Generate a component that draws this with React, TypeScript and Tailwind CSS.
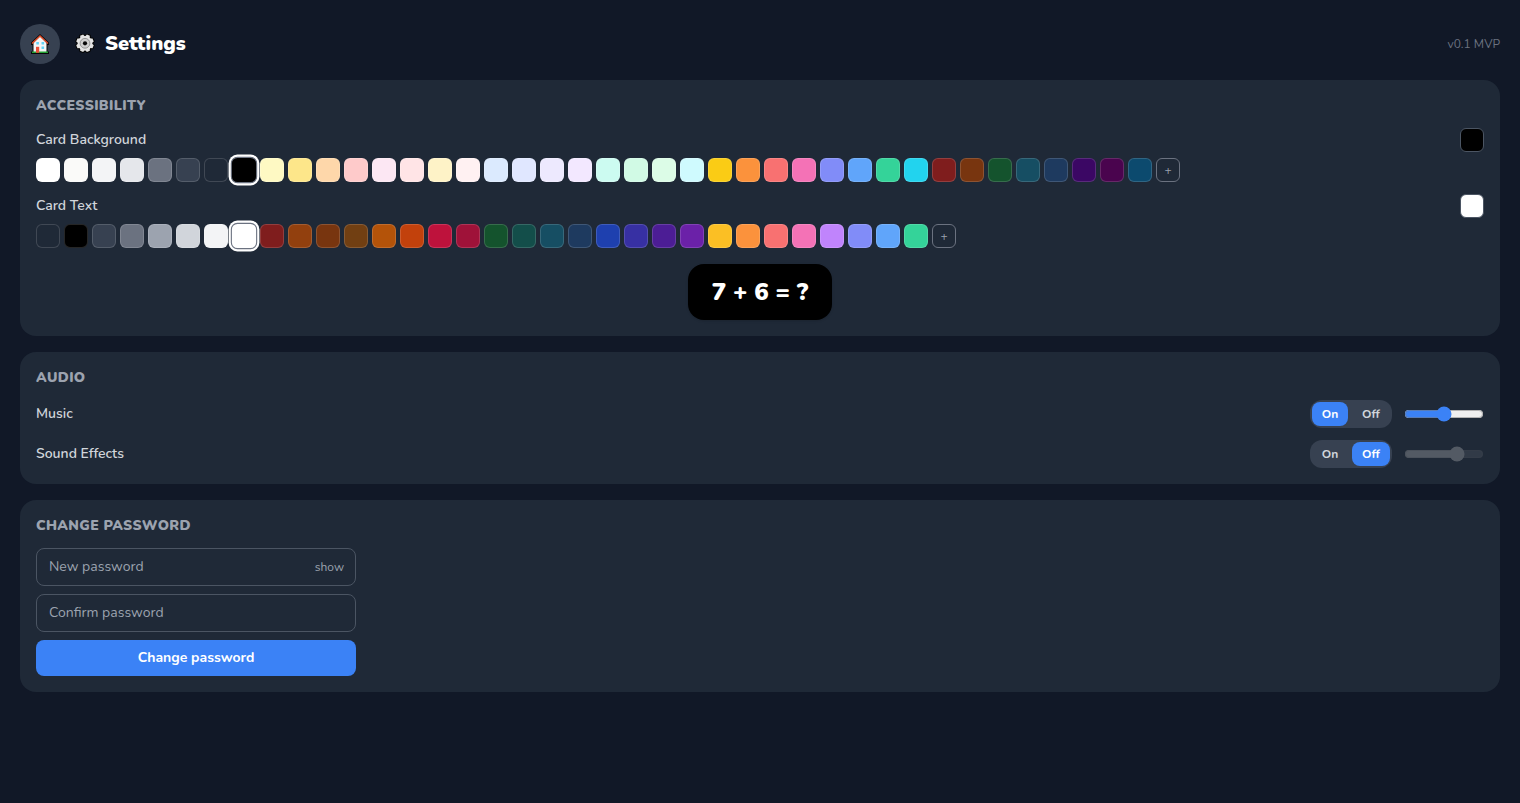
import { useState } from "react";
import type { ReactNode } from "react";

const BACKGROUNDS = [
  "#ffffff", "#fafaf9", "#f3f4f6", "#e5e7eb", "#6b7280", "#374151", "#1f2937", "#000000",
  "#fef9c3", "#fde68a", "#fed7aa", "#fecaca", "#fce7f3", "#ffe4e6", "#fef3c7", "#fff1f2",
  "#dbeafe", "#e0e7ff", "#ede9fe", "#f3e8ff", "#ccfbf1", "#d1fae5", "#dcfce7", "#cffafe",
  "#facc15", "#fb923c", "#f87171", "#f472b6", "#818cf8", "#60a5fa", "#34d399", "#22d3ee",
  "#7f1d1d", "#78350f", "#14532d", "#164e63", "#1e3a5f", "#3b0764", "#4a044e", "#0c4a6e",
];

const TEXT_COLORS = [
  "#1f2937", "#000000", "#374151", "#6b7280", "#9ca3af", "#d1d5db", "#f3f4f6", "#ffffff",
  "#7f1d1d", "#92400e", "#78350f", "#713f12", "#b45309", "#c2410c", "#be123c", "#9f1239",
  "#14532d", "#134e4a", "#164e63", "#1e3a5f", "#1e40af", "#3730a3", "#4c1d95", "#6b21a8",
  "#fbbf24", "#fb923c", "#f87171", "#f472b6", "#c084fc", "#818cf8", "#60a5fa", "#34d399",
];

function HomeIcon() {
  return (
    <svg className="w-5 h-5" viewBox="0 0 20 20" aria-hidden="true">
      <path d="M10 0 19 8.5V11h-1.5v6.5H19V20H1v-2.5h1.5V11H1V8.5z" fill="#080808" />
      <path d="M10 2.5 16.5 9v9.5h-13V9z" fill="#f4f4f4" />
      <path d="M2 9.5 10 2l8 7.5" fill="none" stroke="#e8502c" strokeWidth="1.3" />
      <path d="M2 17.5h16V19H2z" fill="#25a335" />
      <path d="M6.3 8h2.6v2.4H6.3zM11.5 8h2.6v2.4h-2.6zM11.5 12.5h2.6v2.6h-2.6z" fill="#62d2f5" />
      <path d="M6 12.8h3.2v6H6z" fill="#e94f38" />
    </svg>
  );
}

function GearIcon() {
  return (
    <svg className="w-5 h-5 shrink-0" viewBox="-10 -9.3 20 20" aria-hidden="true">
      <g fill="#050505" stroke="#050505" strokeWidth="2" strokeLinejoin="round">
        {[22.5, 67.5, 112.5, 157.5].map((angle) => (
          <path key={angle} d="M-1.6-8.8h3.2l.9 2.6v12.4l-.9 2.6h-3.2l-.9-2.6v-12.4z" transform={`rotate(${angle})`} />
        ))}
        <circle r="7" />
      </g>
      <g fill="#e4e4e4">
        {[22.5, 67.5, 112.5, 157.5].map((angle) => (
          <path key={angle} d="M-1.6-8.8h3.2l.9 2.6v12.4l-.9 2.6h-3.2l-.9-2.6v-12.4z" transform={`rotate(${angle})`} />
        ))}
        <circle r="7.2" />
      </g>
      <circle r="4.9" fill="#cfcfcf" stroke="#858585" strokeWidth=".8" />
      <circle r="2.1" fill="#080808" />
    </svg>
  );
}

function Section({ title, children }: { title: string; children: ReactNode }) {
  return (
    <section className="p-4 rounded-2xl bg-[#1f2937]">
      <h2 className="mb-3 text-sm font-black tracking-wide uppercase text-[#9ca3af]">{title}</h2>
      {children}
    </section>
  );
}

type ColorPickerProps = {
  label: string;
  colors: string[];
  value: string;
  onChange: (color: string) => void;
};

function ColorPicker({ label, colors, value, onChange }: ColorPickerProps) {
  return (
    <div className="flex flex-col gap-1.5">
      <div className="flex items-center justify-between">
        <span className="text-sm font-semibold text-[#d1d5db]">{label}</span>
        <span className="w-6 h-6 rounded-md border border-[#4b5563]" style={{ backgroundColor: value }} />
      </div>
      <div className="flex flex-wrap gap-1">
        {colors.map((color) => (
          <button
            key={color}
            type="button"
            aria-label={`${label} ${color}`}
            aria-pressed={color === value}
            onClick={() => onChange(color)}
            className={`w-6 h-6 rounded-md border ${
              color === value ? "scale-110 border-[#6b7280] ring-2 ring-white" : "border-white/15"
            }`}
            style={{ backgroundColor: color }}
          />
        ))}
        <button
          type="button"
          aria-label={`Custom ${label}`}
          className="flex items-center justify-center w-6 h-6 rounded-md border border-[#6b7280] text-xs text-[#9ca3af]"
        >
          +
        </button>
      </div>
    </div>
  );
}

function AudioRow({ label, initialOn, initialVolume }: { label: string; initialOn: boolean; initialVolume: number }) {
  const [on, setOn] = useState(initialOn);
  const [volume, setVolume] = useState(initialVolume);

  return (
    <div className="flex items-center justify-between">
      <span className="text-sm font-semibold text-[#d1d5db]">{label}</span>
      <div className="flex items-center gap-3">
        <div className="flex gap-1 p-0.5 rounded-xl bg-[#374151]">
          <button
            type="button"
            onClick={() => setOn(true)}
            className={`w-9 h-6 rounded-lg text-xs font-bold ${on ? "bg-[#3b82f6] text-white" : "text-[#d1d5db]"}`}
          >
            On
          </button>
          <button
            type="button"
            onClick={() => setOn(false)}
            className={`w-[38px] h-6 rounded-lg text-xs font-bold ${on ? "text-[#d1d5db]" : "bg-[#3b82f6] text-white"}`}
          >
            Off
          </button>
        </div>
        <input
          type="range"
          aria-label={`${label} volume`}
          min={0}
          max={100}
          value={volume}
          disabled={!on}
          onChange={(e) => setVolume(Number(e.target.value))}
          className="w-20 accent-[#3b82f6] disabled:opacity-30"
        />
      </div>
    </div>
  );
}

export default function App() {
  const [background, setBackground] = useState("#000000");
  const [text, setText] = useState("#ffffff");
  const [visible, setVisible] = useState(false);

  return (
    <div className="min-h-screen px-5 py-6 bg-[#111827] font-[Nunito,Lato,sans-serif] text-white">
      {/* Header */}
      <header className="flex items-center gap-[15px] mb-4">
        <button
          type="button"
          aria-label="Home"
          className="flex items-center justify-center w-10 h-10 rounded-full bg-[#374151]"
        >
          <HomeIcon />
        </button>
        <h1 className="flex items-center gap-2.5 text-xl font-black">
          <GearIcon />
          Settings
        </h1>
        <span className="ml-auto text-xs text-[#6b7280]">v0.1 MVP</span>
      </header>

      <main className="flex flex-col gap-4">
        <Section title="Accessibility">
          <div className="flex flex-col gap-3">
            <ColorPicker label="Card Background" colors={BACKGROUNDS} value={background} onChange={setBackground} />
            <ColorPicker label="Card Text" colors={TEXT_COLORS} value={text} onChange={setText} />
          </div>
          {/* Card preview */}
          <div className="flex justify-center mt-4">
            <div
              className="px-6 py-3 rounded-2xl shadow text-2xl font-black"
              style={{ backgroundColor: background, color: text }}
            >
              7 + 6 = ?
            </div>
          </div>
        </Section>

        <Section title="Audio">
          <div className="flex flex-col gap-3">
            <AudioRow label="Music" initialOn={true} initialVolume={50} />
            <AudioRow label="Sound Effects" initialOn={false} initialVolume={70} />
          </div>
        </Section>

        <Section title="Change Password">
          <form className="flex flex-col gap-2 max-w-80" onSubmit={(e) => e.preventDefault()}>
            <div className="flex items-center rounded-lg border border-[#4b5563]">
              <input
                type={visible ? "text" : "password"}
                aria-label="New password"
                placeholder="New password"
                className="flex-1 min-w-0 px-3 py-2 text-sm outline-none placeholder:text-[#9ca3af]"
              />
              <button
                type="button"
                onClick={() => setVisible(!visible)}
                className="px-[11px] text-xs text-[#9ca3af]"
              >
                {visible ? "hide" : "show"}
              </button>
            </div>
            <input
              type={visible ? "text" : "password"}
              aria-label="Confirm password"
              placeholder="Confirm password"
              className="px-3 py-2 rounded-lg border border-[#4b5563] text-sm outline-none placeholder:text-[#9ca3af]"
            />
            <button type="submit" className="py-2 rounded-lg bg-[#3b82f6] text-sm font-bold">
              Change password
            </button>
          </form>
        </Section>
      </main>
    </div>
  );
}
